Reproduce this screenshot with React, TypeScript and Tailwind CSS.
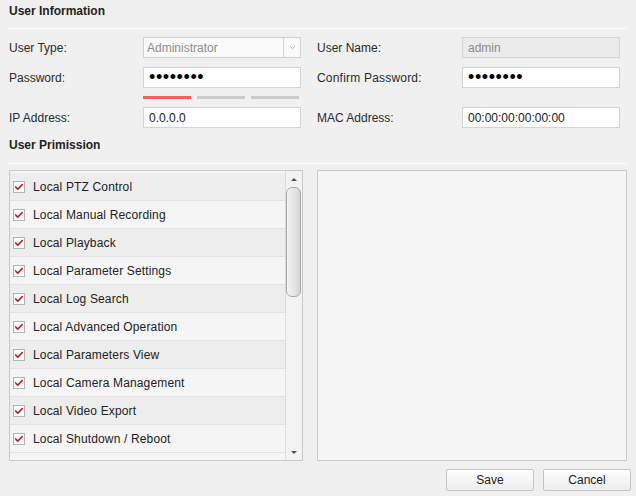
import { Check, ChevronDown } from 'lucide-react';

const permissions = [
  'Local PTZ Control',
  'Local Manual Recording',
  'Local Playback',
  'Local Parameter Settings',
  'Local Log Search',
  'Local Advanced Operation',
  'Local Parameters View',
  'Local Camera Management',
  'Local Video Export',
  'Local Shutdown / Reboot',
];

function Dots() {
  return <span className="text-[18px] leading-[19px] tracking-[0.6px] text-black">••••••••</span>;
}

function Field({ children, muted = false }: { children: React.ReactNode; muted?: boolean }) {
  return (
    <div
      className={`h-[21px] flex items-center pl-[5px] border border-[#d4d4d4] ${
        muted ? 'bg-[#ebebeb] text-[#8a8a8a]' : 'bg-white text-[#222]'
      }`}
    >
      {children}
    </div>
  );
}

export default function App() {
  return (
    <div className="w-[636px] h-[496px] bg-[#f0f0f0] pl-[9px] pr-[9px] text-[12px] leading-[14px] text-[#2b2b2b] font-['Liberation_Sans',Arial,sans-serif] overflow-hidden">
      {/* User Information */}
      <div className="h-[28px] pt-[4px] font-bold text-[#222]">User Information</div>
      <div className="h-px bg-white" />

      <div className="mt-[8px] grid grid-cols-[134px_158px_16px_145px_158px] items-center">
        <div>User Type:</div>
        <div className="h-[21px] flex border border-[#d0d0d0] bg-[#fafafa]">
          <div className="flex-1 flex items-center pl-[3px] text-[#8c8c8c]">Administrator</div>
          <div className="w-[17px] border-l border-[#d0d0d0] flex items-center justify-center">
            <ChevronDown className="w-[9px] h-[9px] text-[#9a9a9a]" strokeWidth={2} />
          </div>
        </div>
        <div />
        <div>User Name:</div>
        <Field muted>admin</Field>
      </div>

      <div className="mt-[9px] grid grid-cols-[134px_158px_16px_145px_158px] items-center">
        <div>Password:</div>
        <Field>
          <Dots />
        </Field>
        <div />
        <div className="tracking-[0.2px]">Confirm Password:</div>
        <Field>
          <Dots />
        </Field>
      </div>

      <div className="mt-[8px] ml-[134px] flex gap-[6px]">
        <div className="w-[48px] h-[3px] bg-[#f26060]" />
        <div className="w-[48px] h-[3px] bg-[#cbcbcb]" />
        <div className="w-[48px] h-[3px] bg-[#cbcbcb]" />
      </div>

      <div className="mt-[8px] grid grid-cols-[134px_158px_16px_145px_158px] items-center">
        <div>IP Address:</div>
        <Field>0.0.0.0</Field>
        <div />
        <div>MAC Address:</div>
        <Field>00:00:00:00:00:00</Field>
      </div>

      {/* User Permission */}
      <div className="mt-[10px] font-bold text-[#222]">User Primission</div>
      <div className="mt-[11px] h-px bg-white" />

      <div className="mt-[6px] flex gap-[14px]">
        <div className="w-[294px] h-[291px] flex border border-[#c9c9c9] bg-[#f5f5f5]">
          <div className="flex-1 pt-[2px]">
            {permissions.map((p, i) => (
              <div
                key={p}
                className={`h-[28px] flex items-center pl-[3px] border-b border-[#e2e2e2] ${
                  i % 2 === 0 ? 'bg-[#ededed]' : 'bg-[#f5f5f5]'
                }`}
              >
                <span className="w-[12px] h-[12px] bg-white border border-[#b4b4b4] flex items-center justify-center">
                  <Check className="w-[10px] h-[10px] text-[#b81c2a]" strokeWidth={4} />
                </span>
                <span className="ml-[8px] text-[#222] tracking-[0.15px]">{p}</span>
              </div>
            ))}
          </div>
          <div className="w-[17px] border-l border-[#dcdcdc] bg-[#f3f3f3] flex flex-col items-center">
            <div className="h-[16px] flex items-center justify-center">
              <div className="w-0 h-0 border-l-[3px] border-r-[3px] border-b-[3px] border-l-transparent border-r-transparent border-b-[#555]" />
            </div>
            <div className="w-[15px] h-[110px] rounded-[6px] border border-[#a8a8a8] bg-gradient-to-r from-[#f4f4f4] via-[#e6e6e6] to-[#d6d6d6]" />
            <div className="flex-1" />
            <div className="h-[16px] flex items-center justify-center">
              <div className="w-0 h-0 border-l-[3px] border-r-[3px] border-t-[3px] border-l-transparent border-r-transparent border-t-[#555]" />
            </div>
          </div>
        </div>
        <div className="w-[311px] h-[291px] border border-[#c9c9c9] bg-[#f5f5f5]" />
      </div>

      <div className="mt-[8px] -mr-[4px] flex justify-end gap-[9px]">
        <button className="w-[88px] h-[22px] rounded-[2px] border border-[#c4c4c4] bg-gradient-to-b from-white to-[#ececec] text-[#222]">
          Save
        </button>
        <button className="w-[88px] h-[22px] rounded-[2px] border border-[#c4c4c4] bg-gradient-to-b from-white to-[#ececec] text-[#222]">
          Cancel
        </button>
      </div>
    </div>
  );
}
